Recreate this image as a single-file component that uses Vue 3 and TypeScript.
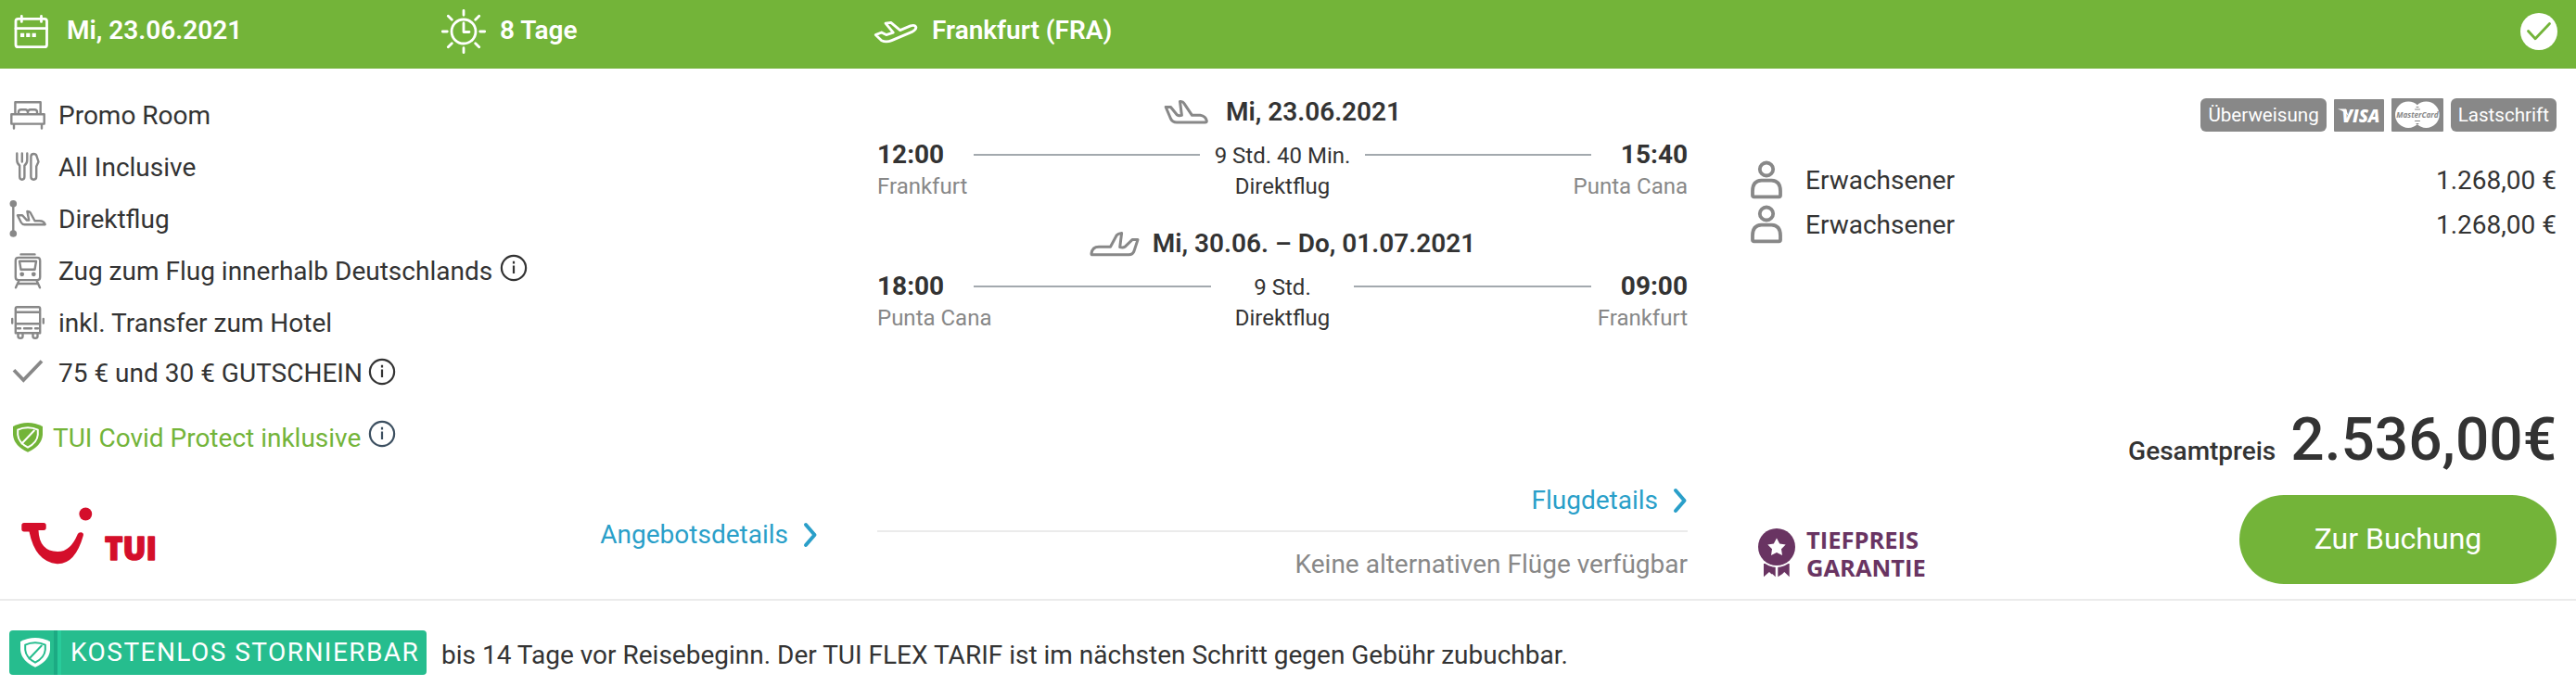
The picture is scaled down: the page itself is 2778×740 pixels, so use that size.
<script setup lang="ts">
interface Feature {
  icon: 'bed' | 'cutlery' | 'direct' | 'train' | 'bus' | 'check' | 'shield'
  label: string
  info?: boolean
}

interface Flight {
  direction: 'out' | 'back'
  date: string
  departure: string
  from: string
  duration: string
  stops: string
  arrival: string
  to: string
}

interface Traveller {
  label: string
  price: string
}

const features: Feature[] = [
  { icon: 'bed', label: 'Promo Room' },
  { icon: 'cutlery', label: 'All Inclusive' },
  { icon: 'direct', label: 'Direktflug' },
  { icon: 'train', label: 'Zug zum Flug innerhalb Deutschlands', info: true },
  { icon: 'bus', label: 'inkl. Transfer zum Hotel' },
  { icon: 'check', label: '75 € und 30 € GUTSCHEIN', info: true },
  { icon: 'shield', label: 'TUI Covid Protect inklusive', info: true },
]

const flights: Flight[] = [
  {
    direction: 'out',
    date: 'Mi, 23.06.2021',
    departure: '12:00',
    from: 'Frankfurt',
    duration: '9 Std. 40 Min.',
    stops: 'Direktflug',
    arrival: '15:40',
    to: 'Punta Cana',
  },
  {
    direction: 'back',
    date: 'Mi, 30.06. – Do, 01.07.2021',
    departure: '18:00',
    from: 'Punta Cana',
    duration: '9 Std.',
    stops: 'Direktflug',
    arrival: '09:00',
    to: 'Frankfurt',
  },
]

const travellers: Traveller[] = [
  { label: 'Erwachsener', price: '1.268,00 €' },
  { label: 'Erwachsener', price: '1.268,00 €' },
]
</script>

<template>
  <article class="offer">
    <header class="bar">
      <div class="bar-item">
        <svg class="i-cal" viewBox="0 0 72 64">
          <rect x="17" y="20.3" width="33.5" height="30.4" rx="2.5" />
          <path d="M17 30.7H50.5M23.3 17.4v6M44.5 17.4v6" />
          <path class="dots" d="M22 35.7h4.2v4.4H22zM28.2 35.7h4.2v4.4h-4.2zM34.6 35.7h4.2v4.4h-4.2z" />
        </svg>
        <span>Mi, 23.06.2021</span>
      </div>
      <div class="bar-item">
        <svg class="i-sun" viewBox="0 0 67 64">
          <circle cx="28" cy="34" r="13" />
          <path d="M28 25v9.5h6M28 11.3v5M28 51.7v5M5.3 34h5M45.7 34h5M11.3 17.3l4 4M44.7 17.3l-4 4M11.3 50.7l4-4M44.7 50.7l-4-4" />
        </svg>
        <span>8 Tage</span>
      </div>
      <div class="bar-item">
        <svg class="i-start" viewBox="0 0 48 28">
          <path d="M2.2 16.6L8.7 14l5 2.6 7.6-2.4L13 4.2l5.8-.8 9.9 8.2 11.2-4.7q5-1.4 6 1.6 0 2.6-4.4 4.9L19.7 22.6q-6 2.6-11 .2z" />
        </svg>
        <span>Frankfurt (FRA)</span>
      </div>
      <svg class="i-done" viewBox="0 0 40 40">
        <circle cx="20" cy="20" r="20" />
        <path d="M8.5 19.5l7.6 8.3L31.5 11.5" />
      </svg>
    </header>

    <div class="body">
      <section class="left">
        <ul class="features">
          <li v-for="f in features" :key="f.icon" :class="['feature', f.icon]">
            <svg class="f-icon" viewBox="0 0 60 56">
              <g v-if="f.icon === 'bed'">
                <path d="M16.4 26V13.2H43.7V26M12.3 26.2H47.7V36.6H12.3zM15 37.5V41.5M45 37.5V41.5M20 26v-2.2q0-2.6 2.8-2.6h4.4q2.8 0 2.8 3.4 0-3.4 2.8-3.4h4.4q2.8 0 2.8 2.6V26" />
              </g>
              <g v-else-if="f.icon === 'cutlery'">
                <path d="M18.3 12.5v7q0 4 2.9 6v12q0 3.2 2.6 3.2t2.6-3.2v-12q2.9-2 2.9-6v-7M23.8 12.5v9M33.4 16q0-3 3-3 2.3 0 3 2l2.1 6.5-2.3 5v11q0 3.2-2.9 3.2t-2.9-3.2z" />
              </g>
              <g v-else-if="f.icon === 'direct'">
                <path d="M14.3 11V43" />
                <circle class="solid" cx="14.3" cy="10.8" r="3.8" />
                <circle class="solid" cx="14.3" cy="43" r="3.8" />
                <path d="M18.9 23.3h5.2l4.9 5.3h2.2l-1.8-9.6q2.4 0 3.4 1.5l4.7 8.8h5q5 0 6.2 3.9H26.5q-2.5 0-3.7-2.2z" />
              </g>
              <g v-else-if="f.icon === 'train'">
                <path d="M22.5 9.4h15M20 12.9h20q3.2 0 3.2 3.2v17.8q0 3.2-3.2 3.2H20q-3.2 0-3.2-3.2V16.1q0-3.2 3.2-3.2zM21 16.7h18l-1.5 9h-15zM20.5 37.5L17 45.3M39.5 37.5L43 45.3M19.5 41h21" />
                <circle class="solid" cx="23.7" cy="30.8" r="2.4" />
                <circle class="solid" cx="36.3" cy="30.8" r="2.4" />
              </g>
              <g v-else-if="f.icon === 'bus'">
                <path d="M18.5 10.3h23q1.7 0 1.7 1.7v26.2H16.8V12q0-1.7 1.7-1.7zM16.8 15.7h26.4M16.8 28.2h26.4M19 33.2h3M26 33.2h8M38 33.2h3M19.5 38.2V42q0 1.7 2.5 1.7t2.5-1.7v-3.8M35.5 38.2V42q0 1.7 2.5 1.7t2.5-1.7v-3.8M13.2 23v4.5M46.8 23v4.5" />
              </g>
              <path v-else-if="f.icon === 'check'" class="tick" d="M15 25.3l10.3 10.8L45 15.5" />
              <g v-else>
                <path class="solid" d="M30 12Q22 12 14 16v9q1 12 16 18.7Q45 37 46 25v-9Q38 12 30 12z" />
                <path class="ring" d="M30 17.3q-6 0-10.8 2.4V25q.8 8.5 10.8 13.7Q40 33.5 40.8 25v-5.3Q36 17.3 30 17.3z" />
                <path class="ring" d="M36.8 20.5L23.5 34.5" />
              </g>
            </svg>
            <span class="label">{{ f.label }}</span>
            <svg v-if="f.info" class="info" viewBox="0 0 30 30">
              <circle cx="15" cy="15" r="13.1" />
              <path d="M15 12.5v8.6M15 7.8v2.6" />
            </svg>
          </li>
        </ul>
        <div class="left-foot">
          <svg class="tui" viewBox="0 0 160 70">
            <circle cx="82.3" cy="19.5" r="6.9" />
            <path d="M16 29h21q2.7 0 2.7 2.7v2.6q0 2.7-2.7 2.7h-5.5q.8 22.5 20.5 23 14 .2 21.7-18.8 1-2.3 3.9-2 3 .5 2.2 3.6Q71 74 51.5 73.2 28 71 21.5 38.5H16q-2.7 0-2.7-2.7v-4.1Q13.3 29 16 29z" />
            <text x="103" y="68.5" textLength="56" lengthAdjust="spacingAndGlyphs">TUI</text>
          </svg>
          <a class="link">Angebotsdetails
            <svg class="chev" viewBox="0 0 16 28"><path d="M3 3l9.500 11L3 25" /></svg>
          </a>
        </div>
      </section>

      <section class="middle">
        <div v-for="flight in flights" :key="flight.direction" class="flight">
          <div class="flight-date">
            <svg v-if="flight.direction === 'out'" class="plane-out" viewBox="0 0 48 28">
              <path d="M2.2 8.5h5.3l6.7 8.3q2 1.5 5.2.5L17.5 2.5q3-.4 4.3 1.8l8.700 13h8.800q6 1 7 6 0 1.700-1.600 1.700H14q-4.500 0-6.500-4z" />
            </svg>
            <svg v-else class="plane-back" viewBox="0 0 54 28">
              <path d="M2 24.500q1-7.200 8-7.200h12.500l6.700-12.500q1.600-2 5.400-2.300l-1.900 15.100q3.500 1 5.300-.3l8-7.700h6L48 21.800q-1.200 4-5.700 4H3q-1.200 0-1-1.300z" />
            </svg>
            <span>{{ flight.date }}</span>
          </div>
          <div class="route">
            <strong class="time">{{ flight.departure }}</strong>
            <i class="track"></i>
            <span class="duration">{{ flight.duration }}</span>
            <i class="track"></i>
            <strong class="time end">{{ flight.arrival }}</strong>
          </div>
          <div class="places">
            <span>{{ flight.from }}</span>
            <span class="stops">{{ flight.stops }}</span>
            <span class="end">{{ flight.to }}</span>
          </div>
        </div>
        <div class="flight-foot">
          <a class="link">Flugdetails
            <svg class="chev" viewBox="0 0 16 28"><path d="M3 3l9.500 11L3 25" /></svg>
          </a>
          <p class="none">Keine alternativen Flüge verfügbar</p>
        </div>
      </section>

      <section class="right">
        <div class="payments">
          <span class="pay">Überweisung</span>
          <svg class="visa" viewBox="0 0 54 35">
            <rect width="54" height="35" rx="1" />
            <text x="8.500" y="24.500" textLength="41" lengthAdjust="spacingAndGlyphs">VISA</text>
            <path d="M4 10.500h9l3 9q-3-6-12-9z" />
          </svg>
          <svg class="mc" viewBox="0 0 56 36">
            <rect width="56" height="36" rx="1" />
            <circle cx="18.200" cy="17.700" r="14.200" />
            <circle cx="37.400" cy="17.700" r="14.200" />
            <path d="M27 9.500h2M25.500 12h5M25.500 24.500h5M27 27.500h2" />
            <text x="5.200" y="21.200" textLength="45.500" lengthAdjust="spacingAndGlyphs">MasterCard</text>
          </svg>
          <span class="pay">Lastschrift</span>
        </div>
        <ul class="travellers">
          <li v-for="(t, i) in travellers" :key="i">
            <svg class="person" viewBox="0 0 36 42">
              <ellipse cx="18" cy="9.500" rx="7.200" ry="7" />
              <path d="M4.500 39.300q-1.500 0-1.500-1.500V33q0-10.800 9.500-11.300h11Q33 22.200 33 33v4.800q0 1.500-1.500 1.500z" />
            </svg>
            <span>{{ t.label }}</span>
            <span class="price">{{ t.price }}</span>
          </li>
        </ul>
        <div class="total"><span>Gesamtpreis</span><strong>2.536,00€</strong></div>
        <div class="buy">
          <div class="guarantee">
            <svg class="award" viewBox="0 0 42 54">
              <path d="M7 38h12.700v14.300l-3.200-3-1.200 0-2.300-2.300L7 52.300zM22.300 38H34.700v14.300l-5.400-5.300-2.300 2.300-4.700 3z" />
              <circle class="halo" cx="21" cy="20" r="22" />
              <circle cx="21" cy="20" r="20" />
              <path class="star" d="M21 10.500l3.200 6 6.500 1-4.700 4.800 1 6.700-6-3-6 3 1-6.700-4.700-4.800 6.500-1z" />
            </svg>
            <div class="guarantee-text">TIEFPREIS<br />GARANTIE</div>
          </div>
          <button class="book" type="button">Zur Buchung</button>
        </div>
      </section>
    </div>

    <footer class="foot">
      <div class="flex-badge">
        <svg class="flex-shield" viewBox="12 10 36 36">
          <path d="M30 12Q22 12 14 16v9q1 12 16 18.700Q45 37 46 25v-9Q38 12 30 12z" />
          <path class="ring" d="M30 17.300q-6 0-10.800 2.400V25q.8 8.500 10.800 13.700Q40 33.500 40.800 25v-5.300Q36 17.300 30 17.300z" />
          <path class="ring" d="M36.800 20.500L23.500 34.500" />
        </svg>
        <span class="flex-label">KOSTENLOS STORNIERBAR</span>
      </div>
      <span class="foot-text">bis 14 Tage vor Reisebeginn. Der TUI FLEX TARIF ist im nächsten Schritt gegen Gebühr zubuchbar.</span>
    </footer>
  </article>
</template>

<style>
body {
  background: #fff;
}
</style>

<style scoped>
.offer {
  width: 2778px;
  height: 740px;
  overflow: hidden;
  background: #fff;
  color: #333;
  font: 400 28px/34px Roboto, "Liberation Sans", sans-serif;
}
svg {
  display: block;
  flex: none;
  fill: none;
  stroke-linecap: round;
  stroke-linejoin: round;
}
ul,
p {
  margin: 0;
  padding: 0;
  list-style: none;
}

/* Green summary bar */
.bar {
  display: grid;
  grid-template-columns: 472px 470px 1fr 40px;
  box-sizing: border-box;
  height: 74px;
  padding: 0 20px 10px 0;
  background: #73b439;
  color: #fff;
  font-weight: 600;
}
.bar-item {
  display: flex;
  align-items: center;
  height: 64px;
}
.bar-item span {
  padding-top: 1px;
}
.bar svg {
  stroke: #fff;
  stroke-width: 2.8;
}
.bar .i-cal .dots {
  fill: #fff;
  stroke: none;
}
.i-cal {
  width: 72px;
  height: 64px;
}
.i-sun {
  width: 67px;
  height: 64px;
}
.i-start {
  width: 48px;
  height: 28px;
  margin: 5px 15px 0 0;
}
.i-done {
  width: 40px;
  height: 40px;
  margin-top: 14px;
}
.i-done circle {
  fill: #fff;
  stroke: none;
}
.bar .i-done path {
  stroke: #73b439;
}

.body {
  display: grid;
  grid-template-columns: 884px 874px 875px;
  column-gap: 62px;
  height: 572px;
  border-bottom: 2px solid #ebebeb;
}
.body > section {
  display: flex;
  flex-direction: column;
}
.body > .right {
  padding-left: 5px;
}

/* Included services */
.features {
  padding-top: 23px;
}
.feature {
  display: flex;
  align-items: center;
  height: 56px;
}
.feature.check {
  height: 50px;
}
.feature.shield {
  height: 90px;
  color: #73b439;
}
.f-icon {
  width: 60px;
  height: 56px;
  margin-right: 3px;
  stroke: #888;
  stroke-width: 2.4;
}
.f-icon .solid {
  fill: #888;
  stroke: none;
}
.f-icon .tick {
  stroke-width: 3.8;
  stroke-linecap: butt;
  stroke-linejoin: miter;
}
.check .label,
.shield .label {
  padding-top: 2px;
}
.shield .f-icon {
  margin-right: -3px;
}
.shield .f-icon .solid {
  fill: #73b439;
}
.f-icon .ring {
  stroke: #fff;
  stroke-width: 2;
}
.info {
  width: 30px;
  height: 30px;
  margin: -9px 0 0 8px;
  stroke: #333;
  stroke-width: 2.2;
  stroke-linecap: butt;
}
.check .info {
  margin: -3px 0 0 6px;
}
.shield .info {
  margin-top: -8px;
  stroke: #3c4f60;
}
.left-foot {
  display: flex;
  align-items: flex-start;
  justify-content: space-between;
  margin-top: 18px;
}
.tui {
  width: 160px;
  height: 70px;
  margin-left: 10px;
  fill: #d40e2a;
  overflow: visible;
}
.tui text {
  font: 800 35px "Open Sans", sans-serif;
  stroke: #d40e2a;
  stroke-width: 1.5;
}
.link {
  display: flex;
  align-items: center;
  color: #2a9fc9;
}
.left-foot .link {
  height: 84px;
  margin-right: 2px;
}
.chev {
  width: 16px;
  height: 28px;
  margin-left: 16px;
  stroke: #2a9fc9;
  stroke-width: 4;
}

/* Flights */
.flight {
  height: 142px;
}
.flight:first-child {
  padding-top: 30px;
}
.flight-date {
  display: flex;
  align-items: center;
  justify-content: center;
  height: 34px;
  font-weight: 600;
}
.plane-out,
.plane-back {
  height: 28px;
  stroke: #888;
  stroke-width: 3;
}
.plane-out {
  width: 48px;
  margin-right: 19px;
}
.plane-back {
  width: 54px;
  margin-right: 14px;
}
.route {
  display: flex;
  align-items: center;
  height: 34px;
  margin-top: 12px;
}
.time {
  width: 104px;
  font-weight: 700;
}
.end {
  text-align: right;
}
.track {
  flex: 1;
  height: 2px;
  background: #a3a9ae;
}
.duration {
  box-sizing: border-box;
  min-width: 154px;
  padding: 2px 16px 0;
  font-size: 24px;
  text-align: center;
}
.places {
  display: grid;
  grid-template-columns: 1fr 1fr 1fr;
  padding-top: 2px;
  color: #888;
  font-size: 24px;
  line-height: 30px;
}
.stops {
  color: #333;
  text-align: center;
}
.flight-foot {
  margin-top: 120px;
}
.flight-foot .link {
  box-sizing: border-box;
  justify-content: flex-end;
  height: 66px;
  border-bottom: 2px solid #ebebeb;
}
.none {
  padding-top: 18px;
  color: #888;
  text-align: right;
}

/* Price column */
.payments {
  display: flex;
  align-items: center;
  justify-content: flex-end;
  gap: 8px;
  height: 36px;
  margin-top: 32px;
}
.pay {
  padding: 0 8px;
  border-radius: 6px;
  background: #888;
  color: #fff;
  font-size: 20.6px;
  line-height: 36px;
}
.visa {
  width: 54px;
  height: 35px;
  fill: #fff;
}
.visa rect,
.mc rect {
  fill: #888;
}
.visa text {
  font: italic 800 19px "Open Sans", sans-serif;
}
.mc {
  width: 56px;
  height: 36px;
  fill: #fff;
  overflow: visible;
}
.mc path {
  stroke: #888;
  stroke-width: 1;
}
.mc text {
  font: italic 700 9.5px "Open Sans", sans-serif;
  fill: #888;
}
.travellers {
  margin-top: 28px;
}
.travellers li {
  display: flex;
  align-items: center;
  height: 48px;
}
.travellers span {
  padding-top: 1px;
}
.person {
  width: 36px;
  height: 42px;
  margin-right: 24px;
  stroke: #888;
  stroke-width: 3.8;
}
.price {
  margin-left: auto;
}
.total {
  display: flex;
  align-items: baseline;
  justify-content: flex-end;
  margin-top: 171px;
  font-weight: 500;
  line-height: 76px;
}
.total strong {
  margin-left: 16px;
  font-size: 64px;
  font-weight: 500;
}
.buy {
  display: flex;
  justify-content: space-between;
  margin-top: 9px;
}
.guarantee {
  display: flex;
  height: 60px;
  margin: 36px 0 0 8px;
  color: #693462;
  font: 700 25.5px/30px "Open Sans", sans-serif;
}
.guarantee-text {
  margin-top: -3px;
}
.award {
  width: 42px;
  height: 54px;
  margin-right: 11px;
  fill: #693462;
}
.award .halo,
.award .star {
  fill: #fff;
}
.book {
  width: 342px;
  height: 96px;
  padding: 0 0 3px;
  border: 0;
  border-radius: 48px;
  background: #73b439;
  color: #fff;
  font: 400 32px/36px Roboto, sans-serif;
}

/* Cancellation notice */
.foot {
  display: flex;
  padding: 32px 0 0 10px;
}
.flex-badge {
  display: flex;
  align-items: center;
  width: 450px;
  height: 48px;
  border-radius: 4px;
  background: #26bd8e;
  color: #fff;
}
.flex-shield {
  width: 36px;
  height: 36px;
  margin: 0 6px 0 10px;
  fill: #fff;
}
.flex-shield .ring {
  stroke: #26bd8e;
  stroke-width: 2;
}
.flex-label {
  padding-left: 10px;
  border-left: 4px solid #28cb9a;
  box-shadow: -4px 0 #1caa83;
  letter-spacing: 1.45px;
  line-height: 48px;
  white-space: nowrap;
}
.foot-text {
  margin: 10px 0 0 16px;
}
</style>
